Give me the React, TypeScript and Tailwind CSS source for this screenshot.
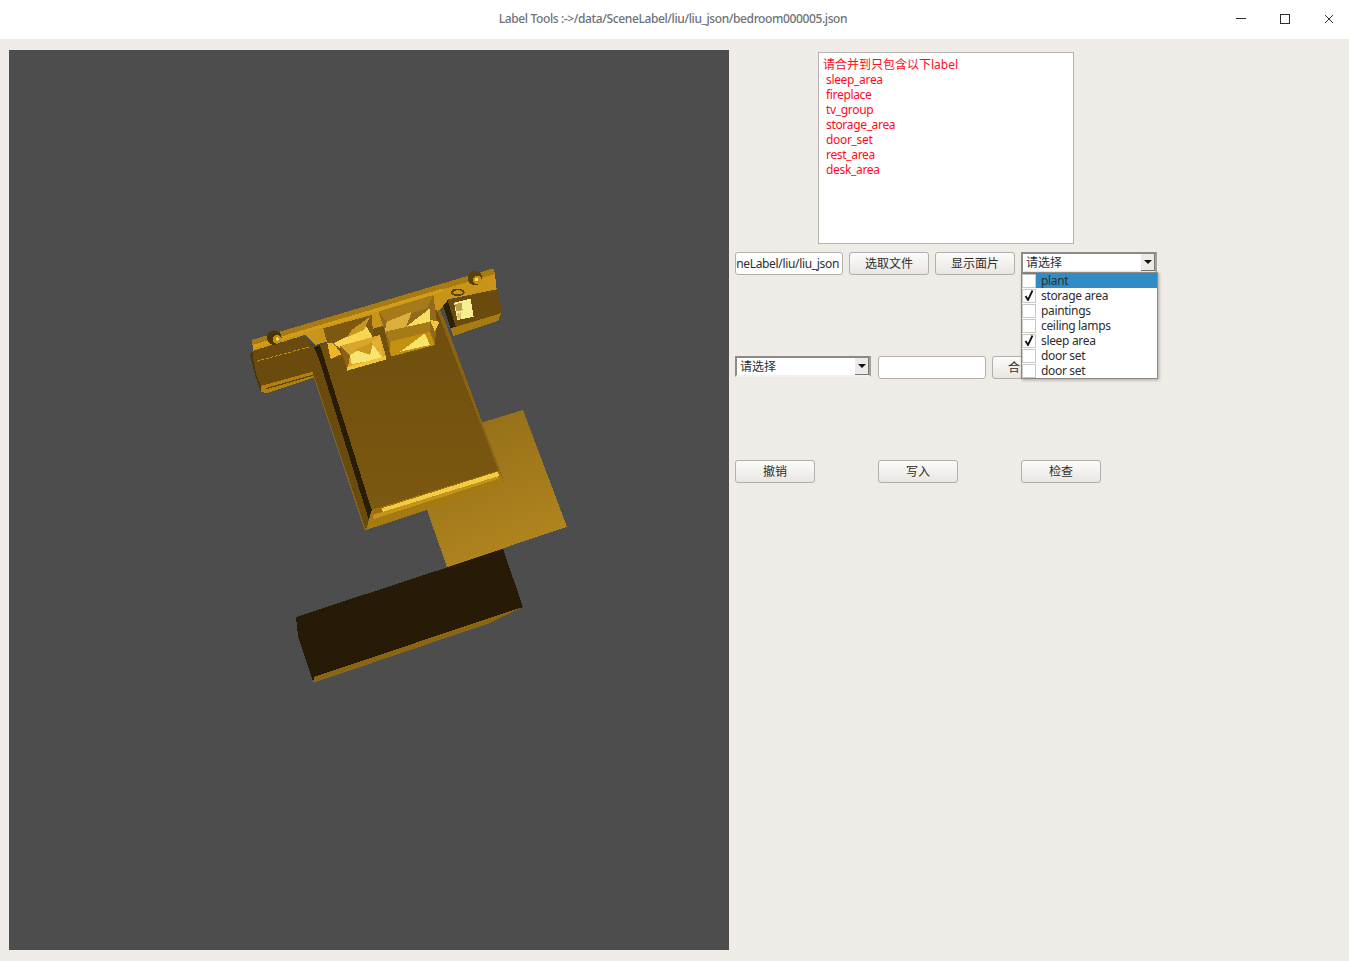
// App.tsx
const font = "font-['Noto_Sans','Noto_Sans_CJK_SC',sans-serif]";
const latin = "tracking-[-0.33px]";

const labels = ["sleep_area", "fireplace", "tv_group", "storage_area", "door_set", "rest_area", "desk_area"];

const options = [
  { name: "plant", checked: false },
  { name: "storage area", checked: true },
  { name: "paintings", checked: false },
  { name: "ceiling lamps", checked: false },
  { name: "sleep area", checked: true },
  { name: "door set", checked: false },
  { name: "door set", checked: false },
];

// Bed scene, coordinates are in 3x pixels of the region starting at (240,260)
const Scene = () => (
  <svg viewBox="9 50 720 900" width="720" height="900" shapeRendering="crispEdges" className="block">
    <defs>
      <linearGradient id="rug" x1="0" y1="0" x2="0.4" y2="1">
        <stop offset="0" stopColor="#906c18" />
        <stop offset="1" stopColor="#b0841e" />
      </linearGradient>
      <linearGradient id="mat" x1="0" y1="0" x2="0" y2="1">
        <stop offset="0" stopColor="#6e4e0e" />
        <stop offset="1" stopColor="#7c5810" />
      </linearGradient>
    </defs>
    {/* rug */}
    <polygon points="480,423 523,410 567,527 447,567 420,490" fill="url(#rug)" />
    {/* dark box on the floor */}
    <polygon points="296,617 503,549 523,607 313,682 298,636" fill="#271a06" />
    <polygon points="314,677 522,607 490,623 313,683" fill="#8a6514" />
    <g transform="translate(240 260) scale(0.33333)">
      {/* left nightstand */}
      <polygon points="30,285 40,272 195,228 222,262 222,352 80,400 62,395 45,345" fill="#4a3509" />
      <polygon points="38,272 195,228 220,262 222,335 66,385 48,340 40,300" fill="#6a4b0d" />
      <polygon points="62,378 218,335 222,352 80,400 62,395" fill="#b08012" />
      <polygon points="78,384 218,344 218,348 78,388" fill="#5e430c" />
      <line x1="50" y1="304" x2="210" y2="260" stroke="#c4900f" strokeWidth="3" strokeDasharray="9 5" />
      {/* right nightstand */}
      <polygon points="605,125 770,85 787,155 775,182 640,228" fill="#6a4b0d" />
      <polygon points="605,125 622,118 650,210 640,228" fill="#2e2007" />
      <polygon points="632,205 783,160 775,182 640,228" fill="#a87b12" />
      <line x1="625" y1="115" x2="770" y2="78" stroke="#c4900f" strokeWidth="3" strokeDasharray="9 5" />
      <polygon points="642,128 692,116 701,170 652,180" fill="#f6ee90" />
      <polygon points="645,133 665,128 668,150 650,155" fill="#b8a04a" />
      <polygon points="650,160 662,157 664,175 654,178" fill="#d9c468" />
      {/* headboard */}
      <polygon points="35,240 760,25 765,42 770,88 625,118 600,150 225,255 195,225 40,272" fill="#c8941a" />
      <polygon points="35,240 760,25 765,42 38,255" fill="#a87b12" />
      <polygon points="38,255 610,85 612,95 40,265" fill="#d19c1c" />
      <ellipse cx="653" cy="97" rx="21" ry="11" fill="#5c420c" />
      <ellipse cx="654" cy="97" rx="14" ry="6" fill="#c8941a" />
      {/* bed frame */}
      <polygon points="215,265 600,150 795,672 378,810" fill="#8a6412" />
      <polygon points="215,265 235,255 395,750 385,785 378,810 220,340" fill="#6a4b0d" />
      <polygon points="222,262 240,255 396,748 386,778 238,300" fill="#2a1d06" />
      <polygon points="221,345 378,811 374,811 218,345" fill="#8a6412" />
      <polygon points="240,255 590,150 775,632 395,750" fill="url(#mat)" />
      <polygon points="590,150 610,170 795,672 775,632" fill="#8a6412" />
      <polygon points="395,750 775,632 795,672 378,810" fill="#a67a12" />
      <polygon points="395,752 775,632 778,655 398,780" fill="#9a7012" />
      <polygon points="425,745 772,635 778,648 430,758" fill="#f3cc44" />
      <polygon points="398,765 770,650 776,656 400,778" fill="#c4941a" />
      {/* right pillow */}
      <polygon points="415,155 580,105 590,180 585,255 452,290 435,215" fill="#93691a" />
      <polygon points="415,155 580,105 560,145 440,185" fill="#a67a18" />
      <polygon points="440,185 515,155 495,210 435,215" fill="#dcae3c" />
      <polygon points="505,195 570,145 570,185 490,215" fill="#f8de5e" />
      <polygon points="435,215 570,185 570,215 450,245" fill="#a67a14" />
      <polygon points="450,245 570,215 585,255 452,290" fill="#c4900f" />
      <polygon points="495,265 555,220 570,255 480,275" fill="#f8e468" />
      <polygon points="570,180 598,185 585,215" fill="#f3c63a" />
      {/* left pillow */}
      <polygon points="250,205 395,165 400,230 300,258 312,290 272,297 262,250" fill="#7c5810" />
      <polygon points="280,250 380,200 400,235 325,262 300,265" fill="#f6d652" />
      <polygon points="335,210 390,170 372,210 320,232" fill="#c9961f" />
      <polygon points="262,250 280,250 305,282 272,297" fill="#eeb42a" />
      {/* front pillow */}
      <polygon points="300,258 420,225 440,298 322,332" fill="#d9a52a" />
      <polygon points="330,285 400,245 430,296 335,312" fill="#f8e470" />
      <polygon points="345,270 400,245 390,285" fill="#c9961f" />
      <polygon points="395,250 420,225 430,296" fill="#e4b030" />
      <polygon points="300,258 330,285 322,332" fill="#8a6414" />
      <polygon points="322,320 438,288 440,298 322,332" fill="#f0c438" />
      {/* lamps */}
      <circle cx="103" cy="233" r="22" fill="#4a3509" />
      <circle cx="111" cy="238" r="13" fill="#c4900f" />
      <circle cx="113" cy="237" r="5" fill="#f8d95e" />
      <circle cx="705" cy="54" r="22" fill="#5a410c" />
      <circle cx="712" cy="60" r="13" fill="#c4900f" />
      <circle cx="710" cy="58" r="5" fill="#f8d95e" />
    </g>
  </svg>
);

const Btn = ({ children, className = "" }: { children: React.ReactNode; className?: string }) => (
  <button className={`block w-[80px] h-[23px] shrink-0 rounded-[3px] border border-[#b3afaa] bg-gradient-to-b from-[#fcfcfb] to-[#e9e6e2] text-[12px] text-[#2e2e2e] leading-[21px] ${className}`}>
    {children}
  </button>
);

const Combo = ({ width }: { width: string }) => (
  <div className={`${width} h-[21px] shrink-0 flex items-center border-2 border-t-[#8c8a87] border-l-[#8c8a87] border-r-[#a5a29e] border-b-[#f4f2ef] bg-white`}>
    <span className="flex-1 pl-[3px] text-[12px] text-[#2e2e2e]">请选择</span>
    <span className="w-[14px] h-[17px] flex items-center justify-center bg-[#eeebe7] border-r border-b border-[#777]">
      <svg width="8" height="4" viewBox="0 0 8 4"><polygon points="0,0 8,0 4,4" fill="#111" /></svg>
    </span>
  </div>
);

export default function App() {
  return (
    <div className={`${font} w-[1349px] h-[961px] flex flex-col bg-[#efebe7] overflow-hidden`}>
      {/* title bar */}
      <div className="h-[39px] shrink-0 flex items-center bg-white">
        <div className="w-[125px]" />
        <div className="flex-1 pb-[2px] text-center text-[12px] font-medium tracking-[-0.38px] text-[#6d7178]">
          Label Tools :-&gt;/data/SceneLabel/liu/liu_json/bedroom000005.json
        </div>
        <div className="flex gap-[4px]">
          <div className="w-[40px] h-[39px] pb-[2px] flex items-center justify-center">
            <svg width="10" height="10" viewBox="0 0 10 10"><rect x="0" y="4" width="10" height="1" fill="#2e2e2e" /></svg>
          </div>
          <div className="w-[40px] h-[39px] pb-[2px] flex items-center justify-center">
            <svg width="10" height="10" viewBox="0 0 10 10"><rect x="0.5" y="0.5" width="9" height="9" fill="none" stroke="#2e2e2e" /></svg>
          </div>
          <div className="w-[40px] h-[39px] pb-[2px] flex items-center justify-center">
            <svg width="10" height="10" viewBox="0 0 10 10"><path d="M1 1 L9 9 M9 1 L1 9" stroke="#2e2e2e" strokeWidth="1" /></svg>
          </div>
        </div>
      </div>

      {/* main area */}
      <div className="flex-1 flex pl-[9px] pt-[11px]">
        <div className="w-[720px] h-[900px] bg-[#4d4d4d]">
          <Scene />
        </div>

        <div className="ml-[6px] flex flex-col">
          <div className="ml-[83px] mt-[2px] w-[256px] h-[192px] border border-[#b7b4af] bg-white pl-[4px] pt-[4px] text-[12px] leading-[15px] text-[#ff0a22]">
            <div>请合并到只包含以下label</div>
            {labels.map((l) => (
              <div key={l} className={`pl-[3px] ${latin}`}>{l}</div>
            ))}
          </div>

          {/* file row */}
          <div className="relative mt-[8px] flex gap-[6px]">
            <div className={`w-[108px] h-[23px] shrink-0 flex justify-end items-center overflow-hidden whitespace-nowrap rounded-[3px] border border-[#b3afaa] bg-white pr-[3px] text-[12px] text-[#2e2e2e] ${latin}`}>
              /data/SceneLabel/liu/liu_json
            </div>
            <Btn>选取文件</Btn>
            <Btn>显示面片</Btn>
            <Combo width="w-[136px]" />
            {/* open dropdown */}
            <div className={`absolute z-10 left-[286px] top-[20px] w-[137px] h-[107px] border border-[#8c8a87] bg-white shadow-[1px_1px_3px_rgba(0,0,0,0.3)] ${latin}`}>
              {options.map((o, i) => (
                <div key={i} className={`h-[15px] flex items-center text-[12px] text-[#2e2e2e] ${i === 0 ? "bg-[#308cc6]" : ""}`}>
                  <span className="w-[14px] h-[14px] flex items-center justify-center border border-[#cbc8c3] bg-white">
                    {o.checked && (
                      <svg width="10" height="11" viewBox="0 0 10 11"><path d="M1.5 6 L4 10 L8.5 0.5" fill="none" stroke="#111" strokeWidth="1.8" /></svg>
                    )}
                  </span>
                  <span className="ml-[5px]">{o.name}</span>
                </div>
              ))}
            </div>
          </div>

          {/* merge row */}
          <div className="mt-[81px] flex items-start">
            <Combo width="w-[136px]" />
            <div className="ml-[7px] mr-[6px] w-[108px] h-[23px] shrink-0 rounded-[3px] border border-[#b3afaa] bg-white" />
            {/* the rest of this label sits under the open dropdown */}
            <Btn className="text-left pl-[15px]">合</Btn>
          </div>

          {/* action row */}
          <div className="mt-[81px] flex gap-[63px]">
            <Btn>撤销</Btn>
            <Btn>写入</Btn>
            <Btn>检查</Btn>
          </div>
        </div>
      </div>
    </div>
  );
}
